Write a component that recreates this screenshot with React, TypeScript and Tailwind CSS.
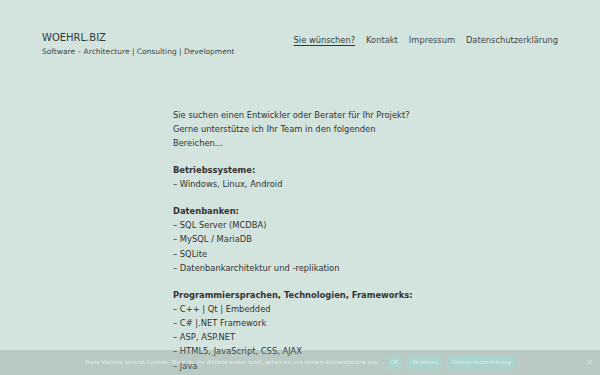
const sections = [
  {
    title: 'Betriebssysteme:',
    items: ['Windows, Linux, Android'],
  },
  {
    title: 'Datenbanken:',
    items: ['SQL Server (MCDBA)', 'MySQL / MariaDB', 'SQLite', 'Datenbankarchitektur und -replikation'],
  },
  {
    title: 'Programmiersprachen, Technologien, Frameworks:',
    items: ['C++ | Qt | Embedded', 'C# |.NET Framework', 'ASP, ASP.NET', 'HTML5, JavaScript, CSS, AJAX', 'Java'],
  },
];

export default function App() {
  return (
    <div className="min-h-screen bg-[#d3e4de] text-[#333] font-['DejaVu_Sans',sans-serif] overflow-hidden h-[375px] relative">
      {/* Header */}
      <header className="flex items-start justify-between pl-[42px] pr-[42px] pt-[31px]">
        <div>
          <div className="text-[10px] leading-[14px] text-[#2f3a3a]">WOEHRL.BIZ</div>
          <div className="text-[7.5px] leading-[12px] mt-[1px] text-[#3d4747]">
            Software – Architecture | Consulting | Development
          </div>
        </div>
        <nav className="flex gap-[11px] text-[8.3px] leading-[14px] pt-[2px] text-[#3d4747]">
          <a className="underline underline-offset-2 text-[#2f3a3a]">Sie wünschen?</a>
          <a>Kontakt</a>
          <a>Impressum</a>
          <a>Datenschutzerklärung</a>
        </nav>
      </header>

      {/* Content */}
      <main className="w-[250px] ml-[173px] mt-[50px] text-[8.35px] leading-[14.2px]">
        <p className="mb-[12.5px]">
          Sie suchen einen Entwickler oder Berater für Ihr Projekt? Gerne unterstütze ich Ihr Team in den folgenden Bereichen...
        </p>
        {sections.map((s) => (
          <div key={s.title} className="mb-[12.5px]">
            <div className="font-bold">{s.title}</div>
            {s.items.map((i) => (
              <div key={i}>– {i}</div>
            ))}
          </div>
        ))}
      </main>

      {/* Cookie bar */}
      <div className="fixed bottom-0 left-0 right-0 h-[25px] bg-[#7f8f8a]/30 flex items-center justify-center gap-[6px] text-[5.35px] text-white/60">
        <span className="mr-[2px]">
          Diese Website benutzt Cookies. Wenn du die Website weiter nutzt, gehen wir von deinem Einverständnis aus.
        </span>
        <span className="bg-[#a9d3cc] px-[4px] h-[14px] flex items-center">OK</span>
        <span className="bg-[#a9d3cc] px-[4px] h-[14px] flex items-center">Ablehnen</span>
        <span className="bg-[#a9d3cc] px-[4px] h-[14px] flex items-center">Datenschutzerklärung</span>
        <span className="absolute right-[7px] text-[8px] text-white/50">×</span>
      </div>
    </div>
  );
}
